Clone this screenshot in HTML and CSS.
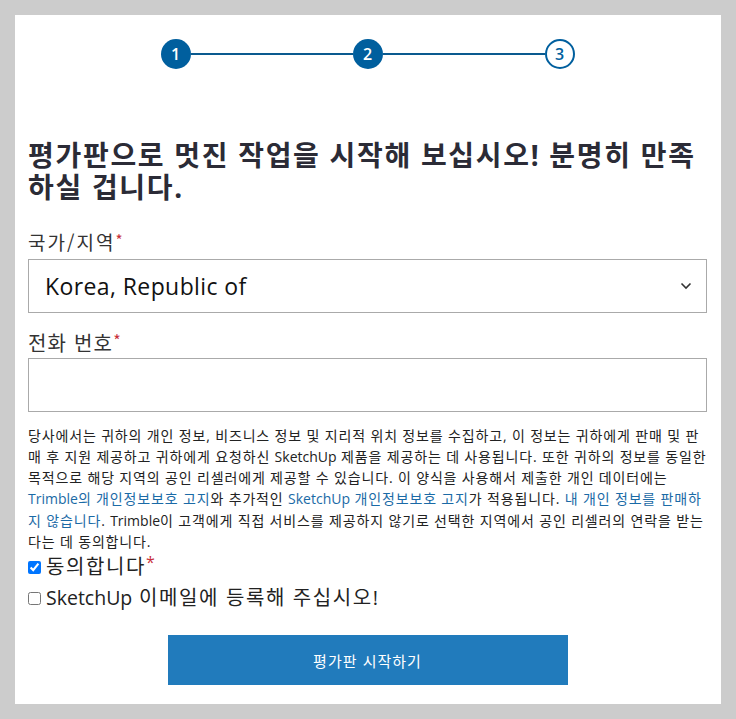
FILE: index.html
```html
<!DOCTYPE html>
<html lang="ko">
<head>
<meta charset="utf-8">
<title>평가판 시작하기</title>
<link rel="stylesheet" href="styles.css">
</head>
<body>
<main class="card">
  <div class="steps">
    <span class="step done">1</span>
    <span class="step-line"></span>
    <span class="step done">2</span>
    <span class="step-line"></span>
    <span class="step todo">3</span>
  </div>

  <h1 class="title">평가판으로 멋진 작업을 시작해 보십시오! 분명히 만족<br>하실 겁니다.</h1>

  <label class="label label-sm">국가/지역<span class="req">*</span></label>
  <div class="select">
    <span class="select-value">Korea, Republic of</span>
    <svg class="chevron" width="12" height="8" viewBox="0 0 12 8"><path d="M1.5 1.5 L6 6 L10.5 1.5" fill="none" stroke="#333" stroke-width="1.6"/></svg>
  </div>

  <label class="label label-lg">전화 번호<span class="req">*</span></label>
  <div class="input"></div>

  <p class="notice">당사에서는 귀하의 개인 정보, 비즈니스 정보 및 지리적 위치 정보를 수집하고, 이 정보는 귀하에게 판매 및 판<br>매 후 지원 제공하고 귀하에게 요청하신 <span class="en">SketchUp</span> 제품을 제공하는 데 사용됩니다. 또한 귀하의 정보를 동일한<br>목적으로 해당 지역의 공인 리셀러에게 제공할 수 있습니다. 이 양식을 사용해서 제출한 개인 데이터에는<br><a href="#"><span class="en">Trimble</span>의 개인정보보호 고지</a>와 추가적인 <a href="#"><span class="en">SketchUp</span> 개인정보보호 고지</a>가 적용됩니다. <a href="#">내 개인 정보를 판매하<br>지 않습니다</a>. <span class="en">Trimble</span>이 고객에게 직접 서비스를 제공하지 않기로 선택한 지역에서 공인 리셀러의 연락을 받는<br>다는 데 동의합니다.</p>

  <label class="check"><input type="checkbox" checked><span>동의합니다<span class="req">*</span></span></label>
  <label class="check"><input type="checkbox"><span><span class="en">SketchUp</span> 이메일에 등록해 주십시오!</span></label>

  <div class="actions">
    <button class="submit" type="button">평가판 시작하기</button>
  </div>
</main>
</body>
</html>
```

FILE: styles.css
```css
* { box-sizing: border-box; }

html, body {
  margin: 0;
  background: #cccccc;
}

body {
  padding: 15px;
  font-family: "Open Sans", "Noto Sans CJK KR", sans-serif;
  color: #222;
}

.card {
  background: #fff;
  width: 706px;
  height: 689px;
  padding: 24px 14px 19px 13px;
  display: flex;
  flex-direction: column;
}

.steps {
  display: flex;
  align-items: center;
  width: 414px;
  margin: 0 auto;
}

.step {
  width: 30px;
  height: 30px;
  border-radius: 50%;
  display: flex;
  align-items: center;
  justify-content: center;
  font-size: 16px;
  font-weight: 600;
  flex: none;
  line-height: 1;
}

.step.done {
  background: #005f9e;
  color: #fff;
}

.step.todo {
  background: #fff;
  color: #005f9e;
  border: 2px solid #005f9e;
}

.step-line {
  flex: 1;
  height: 1.5px;
  background: #0a5a8f;
}

.title {
  margin: 70px 0 0;
  font-family: "Noto Sans", "Noto Sans CJK KR", sans-serif;
  font-size: 28px;
  font-weight: 700;
  line-height: 32px;
  color: #2b2b36;
  letter-spacing: 1.7px;
  white-space: nowrap;
}

.label {
  display: block;
  color: #333;
  font-family: "Noto Sans CJK KR", sans-serif;
}

.label-sm {
  font-size: 19px;
  line-height: 24px;
  margin-top: 27px;
  letter-spacing: 2px;
}

.label-lg {
  font-size: 20px;
  line-height: 26px;
  margin-top: 17px;
  letter-spacing: 1.2px;
}

.req {
  color: #c8303a;
  font-size: 0.8em;
  vertical-align: top;
  line-height: 1;
  position: relative;
  top: 2px;
  letter-spacing: 0;
}

.en {
  letter-spacing: 0;
}

.select {
  margin-top: 5px;
  height: 54px;
  border: 1px solid #aaaaaa;
  display: flex;
  align-items: center;
  justify-content: space-between;
  padding: 0 14px 0 16px;
}

.select-value {
  font-family: "Open Sans", sans-serif;
  font-size: 23px;
  letter-spacing: 0.4px;
  color: #111;
}

.chevron {
  display: block;
}

.input {
  margin-top: 2px;
  height: 54px;
  border: 1px solid #aaaaaa;
}

.notice {
  margin: 13px 0 0;
  font-family: "Open Sans", "Noto Sans CJK KR", sans-serif;
  font-size: 14px;
  line-height: 21.2px;
  letter-spacing: 0.85px;
  color: #222;
  white-space: nowrap;
}

.notice a {
  color: #1a6aa6;
  text-decoration: none;
}

.check {
  display: flex;
  align-items: center;
  font-family: "Open Sans", "Noto Sans CJK KR", sans-serif;
  font-size: 20px;
  line-height: 30px;
  letter-spacing: 1.6px;
  color: #222;
}

.check .en {
  font-size: 19.5px;
}

.check + .check {
  margin-top: 1px;
}

.check input {
  margin: 0 5px 0 0;
  width: 13px;
  height: 13px;
}

.actions {
  margin-top: 22px;
  display: flex;
  justify-content: center;
}

.submit {
  width: 400px;
  height: 50px;
  border: 0;
  background: #217bbc;
  color: #fff;
  font-family: "Noto Sans CJK KR", sans-serif;
  font-size: 15px;
  letter-spacing: 1px;
  cursor: pointer;
}
```
